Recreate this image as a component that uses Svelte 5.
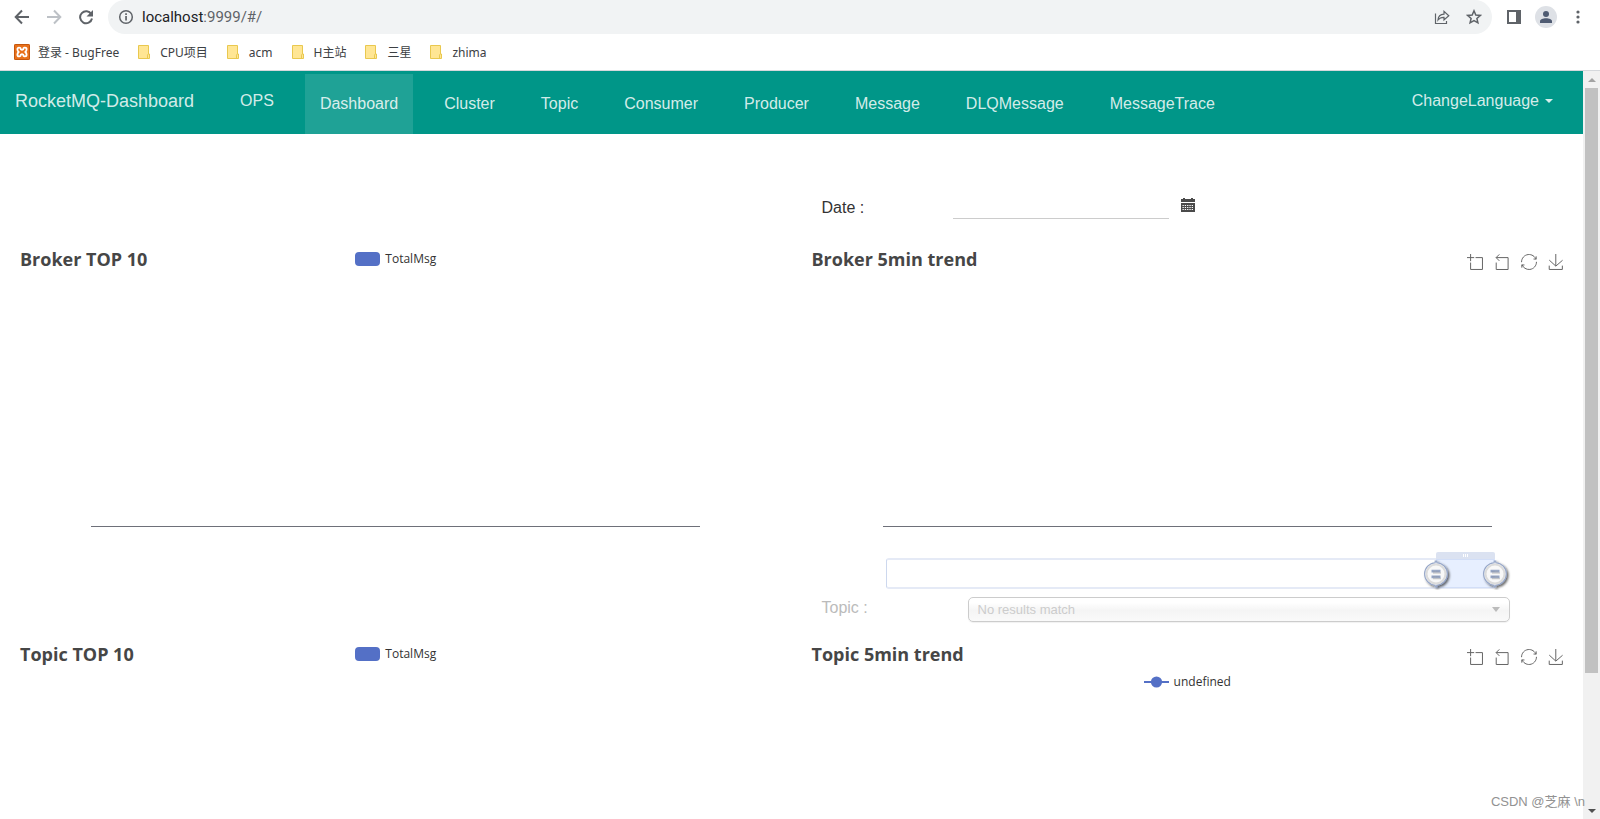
<script>
  const folders = ['CPU项目', 'acm', 'H主站', '三星', 'zhima'];
  const tabs = ['Dashboard', 'Cluster', 'Topic', 'Consumer', 'Producer', 'Message', 'DLQMessage', 'MessageTrace'];
  const tools = [
    { name: 'Zoom', box: '0 0 60 60', d: 'M0,13.5h26.9 M13.5,26.9V0 M32.1,13.5H58V58H13.5 V32.1' },
    { name: 'Zoom reset', box: '2 0 60 60', d: 'M22,1.4L9.9,13.5l12.3,12.3 M10.3,13.5H54.9v44.6 H10.3v-26' },
    { name: 'Restore', box: '0 0 60 60', d: 'M47,18.9h9.8V8.7 M56.3,20.1 C52.1,9,40.5,0.6,26.8,2.1C12.6,3.7,1.6,16.2,2.1,30.6 M13,41.1H3.1v10.2 M3.7,39.9c4.2,11.1,15.8,19.5,29.5,18 c14.2-1.6,25.2-14.1,24.7-28.5' },
    { name: 'Save as image', box: '0 0 60 60', d: 'M4.7,22.9L29.3,45.5L54.7,23.4M4.6,43.6L4.6,58L53.8,58L53.8,43.6M29.2,45.1L29.2,0' }
  ];
  let active = $state('Dashboard');
  let from = $state(90.3);
  let to = $state(100);
</script>

{#snippet toolbox()}
  <div class="toolbox">
    {#each tools as t}
      <button aria-label={t.name}>
        <svg viewBox={t.box}><path d={t.d} vector-effect="non-scaling-stroke" /></svg>
      </button>
    {/each}
  </div>
{/snippet}

{#snippet barChart(title)}
  <section class="chart">
    <h2>{title}</h2>
    <div class="legend"><span class="swatch"></span>TotalMsg</div>
    <div class="plot"></div>
  </section>
{/snippet}

<div class="window">
  <header class="chrome">
    <div class="toolbar">
      <button class="tool" aria-label="Back">
        <svg viewBox="0 0 16 16"><path d="M15 8H2M8 1.5L1.7 8L8 14.5" fill="none" stroke="#5f6368" stroke-width="2" /></svg>
      </button>
      <button class="tool" aria-label="Forward" disabled>
        <svg viewBox="0 0 16 16"><path d="M1 8H14M8 1.5L14.3 8L8 14.5" fill="none" stroke="#bdc1c6" stroke-width="2" /></svg>
      </button>
      <button class="tool" aria-label="Reload">
        <svg viewBox="0 0 16 16"><path d="M13.3 5.2A6 6 0 1 0 14 9.5" fill="none" stroke="#5f6368" stroke-width="2" /><path d="M15 1v6.5H8.5z" fill="#5f6368" /></svg>
      </button>
      <div class="omnibox">
        <svg class="ico" viewBox="0 0 16 16"><circle cx="8" cy="8" r="6.3" fill="none" stroke="#5f6368" stroke-width="1.5" /><path d="M7.2 7h1.7v4.5H7.2zM7.2 4.3h1.7V6H7.2z" fill="#5f6368" /></svg>
        <span class="url">localhost<span>:9999/#/</span></span>
        <button class="tool" aria-label="Share">
          <svg viewBox="0 0 16 16"><path d="M1.5 4.5V14.5H12.5V12M4 11C4.2 7.5 6.5 5.3 10 5.2V2.3L14.8 6.8L10 11V8.3C7.5 8.2 5.5 9 4 11z" fill="none" stroke="#5f6368" stroke-width="1.2" /></svg>
        </button>
        <button class="tool" aria-label="Bookmark this tab">
          <svg viewBox="0 0 16 16"><path d="M8 1.8L9.8 6L14.3 6.4L10.9 9.4L11.9 13.8L8 11.5L4.1 13.8L5.1 9.4L1.7 6.4L6.2 6z" fill="none" stroke="#5f6368" stroke-width="1.5" /></svg>
        </button>
      </div>
      <button class="tool" aria-label="Side panel">
        <svg viewBox="0 0 16 16"><path d="M1 1h14v14H1zM3 3v10h7V3z" fill="#5f6368" fill-rule="evenodd" /></svg>
      </button>
      <button class="tool avatar" aria-label="Profile">
        <svg viewBox="0 0 16 16"><circle cx="8" cy="5" r="3" fill="#4f5b72" /><path d="M2 14v-1.7C2 10.2 5 9.2 8 9.2s6 1 6 3.1V14z" fill="#4f5b72" /></svg>
      </button>
      <button class="tool" aria-label="Menu">
        <svg viewBox="0 0 16 16" fill="#5f6368"><circle cx="8" cy="3" r="1.6" /><circle cx="8" cy="8" r="1.6" /><circle cx="8" cy="13" r="1.6" /></svg>
      </button>
    </div>
    <nav class="bookmarks" aria-label="Bookmarks">
      <a href="#/">
        <svg class="ico" viewBox="0 0 16 16"><rect width="16" height="16" rx="1.5" fill="#e8701a" /><rect x=".5" y=".5" width="15" height="15" rx="1" fill="none" stroke="#c4560c" /><path d="M5.6 3.6H5Q3.4 3.6 3.4 5.2T4.6 8Q3.4 9.2 3.4 10.8T5 12.4H5.4Q6.8 12.4 6.8 10.6Q8 9.6 9.2 10.6Q9.2 12.4 10.6 12.4H11Q12.6 12.4 12.6 10.8T11.4 8Q12.6 6.8 12.6 5.2T11 3.6H10.6Q9.2 3.6 9.2 5.4Q8 6.4 6.8 5.4Q6.8 3.6 5.4 3.6" fill="none" stroke="#fff" stroke-width="1.8" /></svg>
        登录 - BugFree
      </a>
      {#each folders as f}
        <a href="#/" class="folder">
          <svg viewBox="0 0 12 14"><path d="M.5.5h10v8.5h1v4.5H.5z" fill="#ffe694" stroke="#e9c84f" /><path d="M9.5 13.5V10.2q0-1 1-1.2" fill="none" stroke="#e9c84f" /></svg>
          {f}
        </a>
      {/each}
    </nav>
  </header>

  <div class="viewport">
    <div class="page">
      <nav class="navbar">
        <a class="brand" href="#/">RocketMQ-Dashboard</a>
        <a class="item" href="#/ops">OPS</a>
        <ul>
          {#each tabs as t}
            <li><a class="item" class:active={t === active} href="#/" onclick={() => (active = t)}>{t}</a></li>
          {/each}
        </ul>
        <button class="item lang">ChangeLanguage <span class="caret"></span></button>
      </nav>

      <main>
        <div class="field date">
          <label for="date">Date :</label>
          <input id="date" type="text" />
          <button class="cal" aria-label="Open calendar">
            <svg viewBox="0 0 14 14"><path d="M0 1h2V0h2v1h6V0h2v1h2v3H0zM0 5h14v9H0z" fill="#4a4a4a" /><path d="M1.5 7.5h11M1.5 9.5h11M1.5 11.5h11" stroke="#fff" stroke-dasharray="1.3 1" /></svg>
          </button>
        </div>

        {@render barChart('Broker TOP 10')}

        <section class="chart">
          <h2>Broker 5min trend</h2>
          {@render toolbox()}
          <div class="plot"></div>
          <div class="zoom">
            <div class="range" style="left: {from}%; right: {100 - to}%">
              <span class="grip"><i></i><i></i><i></i></span>
            </div>
            <input type="range" aria-label="Range start" min="0" max="100" step="0.1" bind:value={from} />
            <input type="range" aria-label="Range end" min="0" max="100" step="0.1" bind:value={to} />
          </div>
        </section>

        <div class="field topic">
          <label for="topic">Topic :</label>
          <div class="chosen">
            <select id="topic" disabled><option>No results match</option></select>
          </div>
        </div>

        {@render barChart('Topic TOP 10')}

        <section class="chart">
          <h2>Topic 5min trend</h2>
          {@render toolbox()}
          <div class="legend series">
            <svg viewBox="0 0 25 14"><path d="M0 7h25" stroke="#5470c6" stroke-width="2" /><circle cx="12.5" cy="7" r="5.6" fill="#5470c6" /></svg>undefined
          </div>
          <div class="plot"></div>
        </section>
      </main>
    </div>

    <div class="scrollbar" aria-hidden="true">
      <span class="up"></span>
      <span class="thumb"></span>
      <span class="rest"></span>
      <span class="down"></span>
    </div>
    <span class="watermark">CSDN @芝麻 \n</span>
  </div>
</div>

<style>
  :global(body) { margin: 0; background: #fff; }
  .window {
    display: flex;
    flex-direction: column;
    height: 100vh;
    overflow: hidden;
    font-family: "Liberation Sans", "Noto Sans CJK SC", sans-serif;
    font-size: 16px;
    color: #333;
  }
  button { padding: 0; border: 0; background: none; font: inherit; color: inherit; }
  a { color: inherit; text-decoration: none; }
  svg { display: block; }

  .chrome { border-bottom: 1px solid #d5d8dc; font-family: "Noto Sans", "Noto Sans CJK SC", sans-serif; }
  .toolbar { display: flex; align-items: center; gap: 16px; height: 34px; padding: 0 14px; }
  .tool svg, .ico { width: 16px; height: 16px; }
  .omnibox {
    flex: 1;
    display: flex;
    align-items: center;
    gap: 16px;
    height: 34px;
    margin: 0 -2px;
    padding: 0 10px;
    border-radius: 17px;
    background: #f1f3f4;
  }
  .url { flex: 1; margin-left: -8px; font-family: Roboto, sans-serif; font-size: 15px; color: #202124; }
  .url span { color: #5f6368; }
  .avatar { margin: 0 -3px; padding: 3px; border-radius: 50%; background: #dee1e6; }
  .bookmarks { display: flex; align-items: center; gap: 19px; height: 36px; padding: 0 14px; font-size: 12px; color: #3c4043; }
  .bookmarks a { display: flex; align-items: center; gap: 8px; white-space: nowrap; }
  .bookmarks .folder { gap: 10px; }
  .folder svg { width: 12px; height: 14px; }

  .viewport { position: relative; flex: 1; display: flex; min-height: 0; }
  .page { flex: 1; overflow: hidden; }

  .navbar { display: flex; align-items: flex-start; gap: 16px; height: 63px; padding-right: 15px; background: #009688; color: rgba(255, 255, 255, 0.84); }
  .brand { padding: 0 15px; font-size: 18px; line-height: 60px; }
  .item { display: block; padding: 0 15px; line-height: 60px; }
  .navbar ul { display: flex; gap: 16px; margin: 3px 0 0; padding: 0; list-style: none; }
  .active { background: rgba(255, 255, 255, 0.12); }
  .lang { display: flex; align-items: center; gap: 6px; margin-left: auto; }
  .caret { border: 4px solid transparent; border-top-color: currentColor; border-bottom: 0; }

  main { display: grid; grid-template-columns: 1fr 1fr; grid-template-rows: 55px 351px 44px 351px; padding-top: 55px; }
  .field { grid-column: 2; display: grid; padding-left: 30px; }
  .date { grid-template-columns: 131px 216px auto; align-items: start; }
  .date label { line-height: 38px; }
  .date input { height: 29px; padding: 0; border: 0; border-bottom: 1px solid #ccc; font: inherit; }
  .cal { justify-self: start; margin: 9px 12px; }
  .cal svg { width: 14px; height: 14px; }
  .topic { grid-template-columns: 146px 1fr; align-items: start; padding-right: 73px; color: #bbb; }
  .topic label { line-height: 26px; }
  .chosen { position: relative; }
  .chosen::after {
    content: "";
    position: absolute;
    right: 10px;
    top: 12px;
    border: 4px solid transparent;
    border-top: 5px solid #bbb;
    border-bottom: 0;
  }
  .chosen select {
    display: block;
    width: 100%;
    height: 25px;
    margin-top: 2px;
    padding: 0 9px;
    appearance: none;
    border: 1px solid #ccc;
    border-radius: 5px;
    background: linear-gradient(#fff 20%, #f6f6f6 50%, #f4f4f4 52%, #fafafa 100%);
    box-shadow: 0 1px 1px rgba(0, 0, 0, 0.06);
    font: 13px "Liberation Sans", sans-serif;
    color: #ccc;
    opacity: 1;
  }

  .chart { position: relative; display: flex; flex-direction: column; margin: 0 15px; font-family: "Open Sans", sans-serif; }
  h2 { margin: 0; padding: 2px 5px; font-size: 18px; font-weight: 700; line-height: 26px; color: #464646; }
  .legend {
    position: absolute;
    top: 7px;
    left: 0;
    right: 0;
    display: flex;
    align-items: center;
    justify-content: center;
    gap: 5px;
    font-size: 12px;
    line-height: 16px;
    color: #333;
  }
  .swatch { width: 25px; height: 14px; border-radius: 4px; background: #5470c6; }
  .series { top: 35px; }
  .series svg { width: 25px; height: 14px; }
  .toolbox { position: absolute; top: 10px; right: 4px; display: flex; gap: 11px; }
  .toolbox svg { width: 16px; height: 16px; overflow: visible; }
  .toolbox path { fill: none; stroke: #666; stroke-width: 1; }
  .plot { height: 252px; margin: 0 10%; border-bottom: 1px solid #6e7079; }

  .zoom {
    position: relative;
    height: 27px;
    margin: 31px calc(10% - 3px) 0 calc(10% + 3px);
    border: 2px solid #e5eaf6;
    border-left: 1px solid #cdd8ee;
    border-right: 0;
    border-radius: 3px;
  }
  .range { position: absolute; top: -1px; bottom: -1px; background: rgba(135, 175, 255, 0.2); }
  .grip {
    position: absolute;
    left: 0;
    right: 0;
    top: -7px;
    height: 7px;
    display: flex;
    align-items: center;
    justify-content: center;
    gap: 1px;
    border-radius: 2px 2px 0 0;
    background: #dbe2f1;
  }
  .grip i { width: 1px; height: 3px; background: #fff; }
  .zoom input {
    position: absolute;
    left: -16px;
    top: -2px;
    width: calc(100% + 32px);
    height: 32px;
    margin: 0;
    appearance: none;
    background: none;
    pointer-events: none;
  }
  .zoom input::-webkit-slider-thumb {
    appearance: none;
    width: 32px;
    height: 32px;
    pointer-events: auto;
    background: url("data:image/svg+xml,%3Csvg xmlns='http://www.w3.org/2000/svg' width='32' height='32'%3E%3Cdefs%3E%3Cfilter id='s' x='-30%25' y='-30%25' width='160%25' height='160%25'%3E%3CfeDropShadow dx='1.6' dy='1.6' stdDeviation='1.2' flood-opacity='.6'/%3E%3C/filter%3E%3C/defs%3E%3Cg filter='url(%23s)'%3E%3Cpath transform='translate(4 -9.6) scale(1.2)' d='M10.7,11.9v-1.3H9.3v1.3c-4.9,0.3-8.8,4.4-8.8,9.4c0,5,3.9,9.1,8.8,9.4v1.3h1.3v-1.3c4.9-0.3,8.8-4.4,8.8-9.4C19.5,16.3,15.6,12.2,10.7,11.9z M13.3,24.4H6.7V23h6.6V24.4z M13.3,19.6H6.7v-1.4h6.6V19.6z' fill='%23f8f8f8' stroke='%2394a5c8' stroke-width='.9'/%3E%3C/g%3E%3Ccircle cx='16' cy='16' r='9.5' fill='none' stroke='%23999' stroke-opacity='.3' stroke-width='2'/%3E%3Cpath d='M13 15h8M13 20.500h8' stroke='%23888' stroke-opacity='.35' stroke-width='1.5'/%3E%3C/svg%3E");
  }

  .scrollbar { display: flex; flex-direction: column; width: 17px; background: #f1f1f1; }
  .up, .down { display: grid; place-items: center; height: 17px; }
  .up::before { content: ""; border: 4px solid transparent; border-bottom-color: #a3a3a3; border-top: 0; }
  .down::before { content: ""; border: 4px solid transparent; border-top-color: #505050; border-bottom: 0; }
  .thumb { flex: 82; margin: 0 2px; background: #c1c1c1; }
  .rest { flex: 18; }
  .watermark { position: absolute; right: 15px; bottom: 7px; font-size: 13px; line-height: 20px; color: #929292; }
</style>
